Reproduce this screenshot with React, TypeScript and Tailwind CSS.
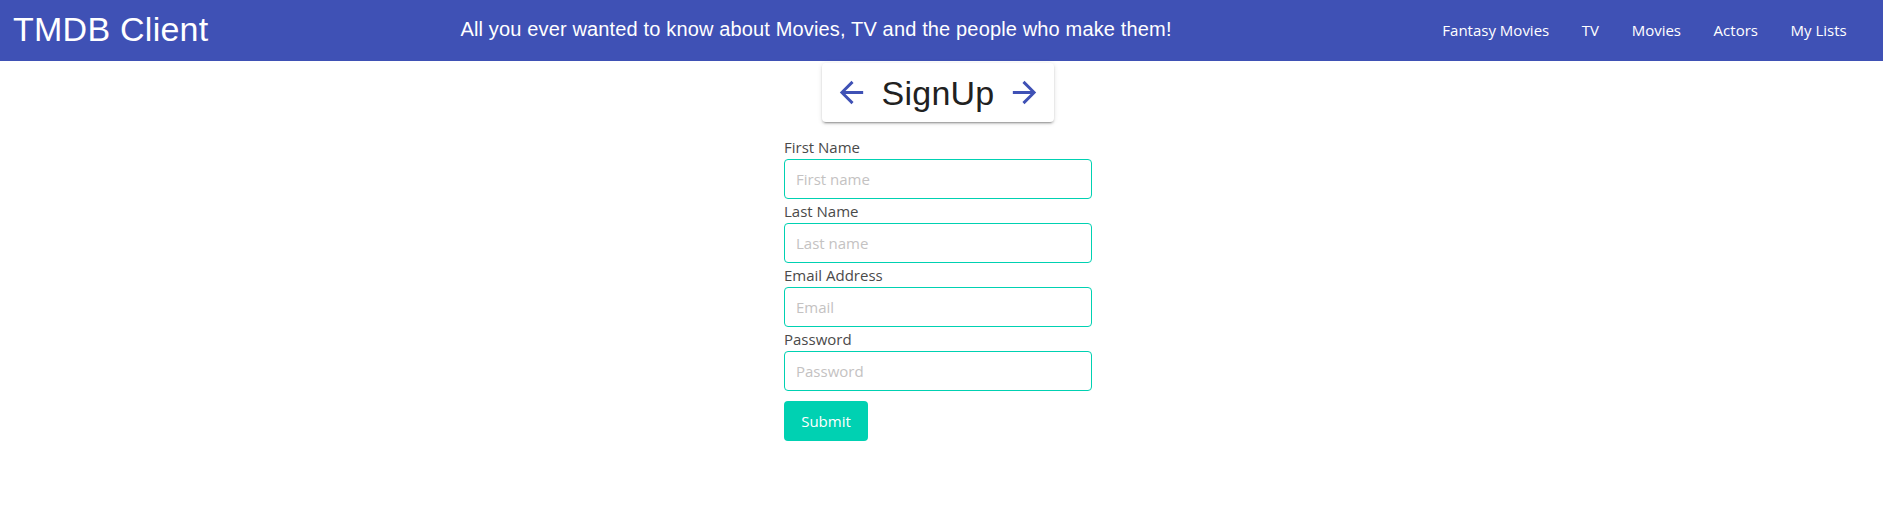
import React from "react";

const ArrowBack = () => (
  <svg viewBox="0 0 24 24" className="w-[35px] h-[35px]" fill="#3f51b5">
    <path d="M20 11H7.83l5.59-5.59L12 4l-8 8 8 8 1.41-1.41L7.83 13H20v-2z" />
  </svg>
);

const ArrowForward = () => (
  <svg viewBox="0 0 24 24" className="w-[35px] h-[35px]" fill="#3f51b5">
    <path d="m12 4-1.41 1.41L16.17 11H4v2h12.17l-5.58 5.59L12 20l8-8z" />
  </svg>
);

const Field = ({ label, placeholder, type = "text" }: { label: string; placeholder: string; type?: string }) => (
  <div className="flex flex-col">
    <label className="h-[24px] leading-[24px] text-[15px] text-[#4a4a4a]">{label}</label>
    <input
      type={type}
      placeholder={placeholder}
      className="h-[40px] w-full rounded-[4px] border border-[#00d1b2] px-[11px] text-[15px] text-[#363636] placeholder:text-[#c4c2c2] outline-none"
    />
  </div>
);

export default function App() {
  return (
    <div className="min-h-[510px] bg-white font-['Open_Sans','Noto_Sans',sans-serif]">
      <header className="h-[61px] bg-[#3f51b5] flex items-center text-white">
        <h1 className="ml-[13px] mb-[4px] text-[34px] leading-none tracking-[0.25px] font-['Liberation_Sans',Arial,sans-serif]">
          TMDB Client
        </h1>
        <h2 className="ml-[252px] mb-[3px] text-[20px] leading-none tracking-[0.15px] font-['Liberation_Sans',Arial,sans-serif]">
          All you ever wanted to know about Movies, TV and the people who make them!
        </h2>
        <nav className="ml-auto pr-[20px] flex items-center">
          {["Fantasy Movies", "TV", "Movies", "Actors", "My Lists"].map((t) => (
            <button key={t} className="px-[16.3px] text-[15px] leading-none text-white">
              {t}
            </button>
          ))}
        </nav>
      </header>
      <main className="flex flex-col items-center pr-[7px]">
        <div className="mt-[2px] flex items-center rounded-[4px] bg-white shadow-[0px_3px_1px_-2px_rgba(0,0,0,0.2),0px_2px_2px_0px_rgba(0,0,0,0.14),0px_1px_5px_0px_rgba(0,0,0,0.12)]">
          <button className="p-3">
            <ArrowBack />
          </button>
          <h3 className="text-[34px] leading-none tracking-[0.25px] text-[#212121] font-['Liberation_Sans',Arial,sans-serif]">SignUp</h3>
          <button className="p-3">
            <ArrowForward />
          </button>
        </div>
        <form className="mt-[13px] w-[308px] flex flex-col" onSubmit={(e) => e.preventDefault()}>
          <Field label="First Name" placeholder="First name" />
          <Field label="Last Name" placeholder="Last name" />
          <Field label="Email Address" placeholder="Email" type="email" />
          <Field label="Password" placeholder="Password" type="password" />
          <div className="mt-[10px]">
            <button
              type="submit"
              className="h-[40px] w-[84px] rounded-[4px] bg-[#00d1b2] text-[15px] text-white"
            >
              Submit
            </button>
          </div>
        </form>
      </main>
    </div>
  );
}
